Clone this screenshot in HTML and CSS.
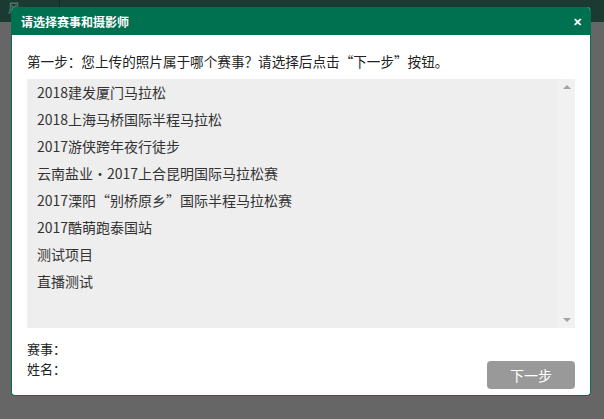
FILE: index.html
```html
<!DOCTYPE html>
<html>
<head lang="en">
    <meta charset="UTF-8">
    <title>请选择赛事和摄影师</title>
    <link rel="stylesheet" href="styles.css">
</head>
<body>
<div class="topbar">
    <div class="logo">风</div>
    <div class="nav"></div>
</div>
<div class="mask"></div>
<div class="dialog">
    <div class="dialog-head">
        <span class="dialog-title">请选择赛事和摄影师</span>
        <span class="close">&#10005;</span>
    </div>
    <div class="dialog-body">
        <p class="step">第一步：您上传的照片属于哪个赛事？请选择后点击“下一步”按钮。</p>
        <div class="listbox">
            <ul class="list">
                <li>2018建发厦门马拉松</li>
                <li>2018上海马桥国际半程马拉松</li>
                <li>2017游侠跨年夜行徒步</li>
                <li>云南盐业·2017上合昆明国际马拉松赛</li>
                <li>2017溧阳“别桥原乡”国际半程马拉松赛</li>
                <li>2017酷萌跑泰国站</li>
                <li>测试项目</li>
                <li>直播测试</li>
            </ul>
            <div class="scrollbar">
                <span class="arrow-up"></span>
                <span class="arrow-down"></span>
            </div>
        </div>
        <div class="foot">
            <div class="info">
                <div>赛事：</div>
                <div>姓名：</div>
            </div>
            <button class="next">下一步</button>
        </div>
    </div>
</div>
</body>
</html>
```

FILE: styles.css
```css
*{
    padding: 0;
    margin: 0;
}
body{
    width: 604px;
    height: 419px;
    background: #666;
    font-family: "Noto Sans CJK SC", "Noto Sans", sans-serif;
    position: relative;
    overflow: hidden;
}
.topbar{
    height: 22px;
    background: #1b3a31;
    display: flex;
}
.logo{
    width: 60px;
    border-right: 1px solid #132b24;
    color: #55716a;
    font-size: 12px;
    font-weight: bold;
    line-height: 16px;
    padding-left: 8px;
    box-sizing: border-box;
}
.mask{
    position: absolute;
    left: 0;
    top: 22px;
    right: 0;
    bottom: 0;
    background: #666;
}
.dialog{
    position: absolute;
    left: 11px;
    top: 7px;
    width: 580px;
    background: #fff;
    border: 1px solid #007150;
    border-top: none;
    border-radius: 4px;
    box-sizing: border-box;
    overflow: hidden;
}
.dialog-head{
    height: 28px;
    background: #007150;
    color: #fff;
    display: flex;
    align-items: center;
    justify-content: space-between;
    padding: 0 8px 0 9px;
}
.dialog-title{
    font-size: 12px;
    font-weight: bold;
}
.close{
    font-size: 11px;
    font-weight: bold;
}
.dialog-body{
    padding: 16px 15px 16px 15px;
}
.step{
    font-size: 13.6px;
    line-height: 20px;
    color: #222;
    margin-bottom: 8px;
}
.listbox{
    height: 249px;
    background: #eee;
    display: flex;
}
.list{
    flex: 1;
    list-style: none;
}
.list li{
    height: 27px;
    line-height: 27px;
    padding-left: 10px;
    font-size: 14px;
    color: #333;
}
.scrollbar{
    width: 17px;
    background: #f1f1f1;
    position: relative;
}
.arrow-up,.arrow-down{
    position: absolute;
    left: 5px;
    width: 0;
    height: 0;
    border-left: 4px solid transparent;
    border-right: 4px solid transparent;
}
.arrow-up{
    top: 6px;
    border-bottom: 4px solid #a3a3a3;
}
.arrow-down{
    bottom: 6px;
    border-top: 4px solid #a3a3a3;
}
.foot{
    display: flex;
    justify-content: space-between;
    align-items: flex-end;
    margin-top: 11px;
}
.info{
    font-size: 13px;
    line-height: 20px;
    color: #222;
}
.next{
    width: 88px;
    height: 28px;
    border: none;
    border-radius: 4px;
    background: #999;
    color: #fff;
    font-family: "Noto Sans CJK SC", sans-serif;
    font-size: 14px;
    margin-bottom: -10px;
}
```
